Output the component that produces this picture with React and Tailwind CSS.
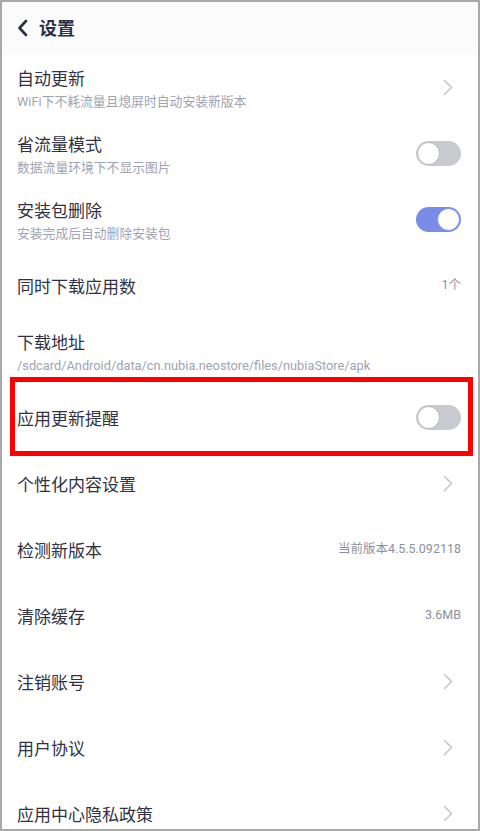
import { useState } from 'react';

const FONT = { fontFamily: 'Roboto, "Noto Sans CJK SC", sans-serif' };

const Chevron = () => (
  <svg width="10" height="17" viewBox="0 0 10 17" fill="none" className="mr-[8px]">
    <path d="M1.5 1.5 L8.5 8.5 L1.5 15.5" stroke="#c4c5ca" strokeWidth="1.5" strokeLinecap="round" strokeLinejoin="round" />
  </svg>
);

const Toggle = ({ on, onClick }) => (
  <button
    onClick={onClick}
    className={`relative w-[45px] h-[25px] rounded-full ${on ? 'bg-[#7a8be8]' : 'bg-[#c9cacf]'}`}
  >
    <span
      className={`absolute top-[1px] w-[23px] h-[23px] rounded-full bg-white ${
        on ? 'right-[1px] border border-[#7a8be8]' : 'left-[1px] border border-[#b8b9bf]'
      }`}
    />
  </button>
);

const Row = ({ title, sub, right, highlight }) => (
  <div className="relative h-[66px] flex items-center justify-between pl-[15px] pr-[17px]">
    <div className="flex flex-col gap-[3px] pt-[3px]">
      <span className="text-[17px] leading-[22px] text-[#303244]">{title}</span>
      {sub && <span className="text-[12.8px] leading-[17px] text-[#a0a3b1]">{sub}</span>}
    </div>
    {right}
    {highlight && (
      <div className="absolute -top-[7px] -bottom-[6px] left-[8px] right-[5px] border-[5px] border-[#ff0000] pointer-events-none" />
    )}
  </div>
);

const Value = ({ children }) => (
  <span className="text-[12.5px] text-[#8d8f9c]">{children}</span>
);

export default function App() {
  const [saver, setSaver] = useState(false);
  const [autoDelete, setAutoDelete] = useState(true);
  const [remind, setRemind] = useState(false);

  return (
    <div style={FONT} className="w-[480px] h-[831px] overflow-hidden bg-white border-2 border-[#a9a9a9]">
      <div className="h-[52px] flex items-center gap-[11px] pl-[15px] bg-[#fbfbfb]">
        <svg width="11" height="18" viewBox="0 0 11 18" fill="none">
          <path d="M9 2 L2.5 9 L9 16" stroke="#2b2f45" strokeWidth="2.6" strokeLinecap="round" strokeLinejoin="round" />
        </svg>
        <span className="text-[18px] font-semibold text-[#2b2f45]">设置</span>
      </div>

      <Row title="自动更新" sub="WiFi下不耗流量且熄屏时自动安装新版本" right={<Chevron />} />
      <Row title="省流量模式" sub="数据流量环境下不显示图片" right={<Toggle on={saver} onClick={() => setSaver(!saver)} />} />
      <Row title="安装包删除" sub="安装完成后自动删除安装包" right={<Toggle on={autoDelete} onClick={() => setAutoDelete(!autoDelete)} />} />
      <Row title="同时下载应用数" right={<Value>1个</Value>} />
      <Row title="下载地址" sub="/sdcard/Android/data/cn.nubia.neostore/files/nubiaStore/apk" />
      <Row title="应用更新提醒" highlight right={<Toggle on={remind} onClick={() => setRemind(!remind)} />} />
      <Row title="个性化内容设置" right={<Chevron />} />
      <Row title="检测新版本" right={<Value>当前版本4.5.5.092118</Value>} />
      <Row title="清除缓存" right={<Value>3.6MB</Value>} />
      <Row title="注销账号" right={<Chevron />} />
      <Row title="用户协议" right={<Chevron />} />
      <Row title="应用中心隐私政策" right={<Chevron />} />
    </div>
  );
}
